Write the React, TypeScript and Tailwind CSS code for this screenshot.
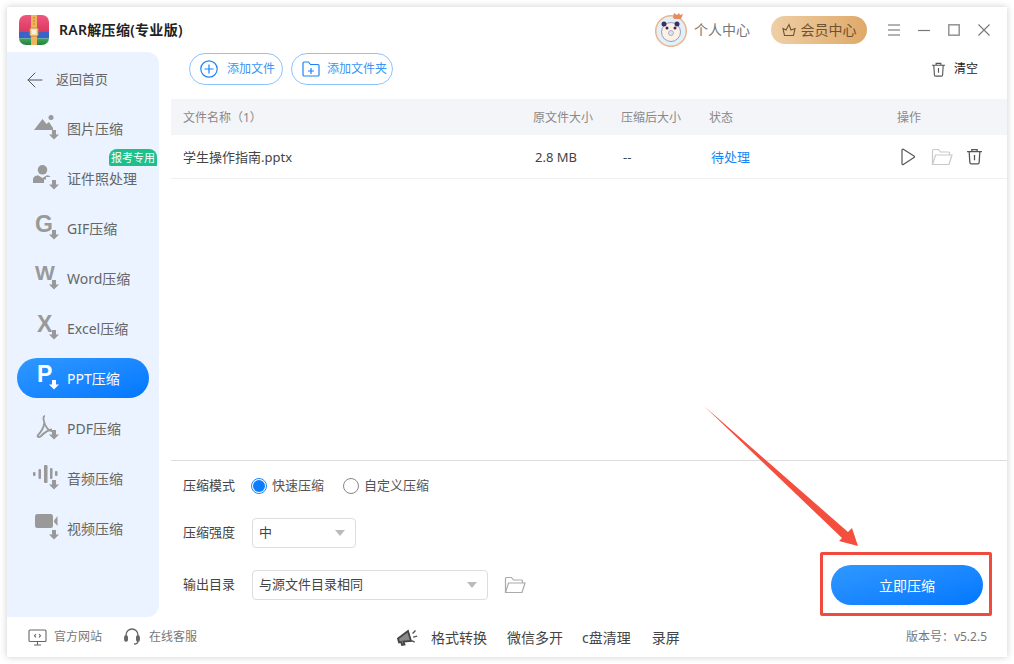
import { ArrowLeft } from 'lucide-react';
import type { ReactNode } from 'react';

const FONT = 'font-["Noto_Sans","Noto_Sans_CJK_SC",sans-serif]';

function DownArrow({ white }: { white?: boolean }) {
  return (
    <svg className="absolute left-[15px] top-[15px]" width="10" height="10" viewBox="0 0 10 10">
      <path d="M3 0h4v4.500h3L5 9.500 0 4.500h3z" fill={white ? '#fff' : '#999'} />
    </svg>
  );
}

function Letter({ children, className }: { children: string; className: string }) {
  return <span className={`absolute font-["Liberation_Sans",sans-serif] leading-[26px] font-bold ${className}`}>{children}</span>;
}

function ImageGlyph() {
  return (
    <svg className="absolute left-0 top-0" width="20" height="18" viewBox="0 0 20 18" fill="#999">
      <circle cx="17" cy="2.500" r="2.500" />
      <path d="M0 15 8.500 4l4 5 2.500-2 4 6v2H8z" />
    </svg>
  );
}

function PersonGlyph() {
  return (
    <svg className="absolute left-[-1px] top-0" width="20" height="20" viewBox="0 0 20 20" fill="#999">
      <circle cx="9.500" cy="4.800" r="4.800" />
      <path d="M0 18v-3.500c0-2.500 2.500-4 5-4.300l4.500 2.800 4.500-2.800c1.500.2 3 .8 3.600 1.800H13v2.500h-2V18z" />
    </svg>
  );
}

function PdfGlyph() {
  return (
    <svg className="absolute left-[2px] top-0" width="20" height="24" viewBox="0 0 20 24" fill="none" stroke="#999" strokeWidth="1.800">
      <path d="M9 1C6.500 1 7 7 11 13c1.200 1.800 3 3 5 3.500" />
      <path d="M8.500 8C7.500 13 5 17 2 20c-1.500 2 1 2.800 3 1 3-3 6-6 11-6.500" />
    </svg>
  );
}

function AudioGlyph() {
  return (
    <svg className="absolute left-[-1px] top-0" width="26" height="20" viewBox="0 0 26 20" fill="#999">
      <rect x="0" y="7" width="2.500" height="4" rx="1" />
      <rect x="5.500" y="4" width="2.500" height="10" rx="1" />
      <rect x="11" y="0" width="3.500" height="18" rx="1" />
      <rect x="17" y="3" width="2.500" height="11" rx="1" />
      <rect x="22" y="6" width="2.500" height="5" rx="1" />
    </svg>
  );
}

function VideoGlyph() {
  return (
    <svg className="absolute left-[1px] top-[-1px]" width="24" height="16" viewBox="0 0 24 16" fill="#999">
      <rect x="0" y="0" width="18" height="14" rx="2.500" />
      <path d="M19 6.500 22.500 2v10L19 8z" />
    </svg>
  );
}

const NAV: { label: string; glyph: ReactNode; active?: boolean }[] = [
  { label: '图片压缩', glyph: <ImageGlyph /> },
  { label: '证件照处理', glyph: <PersonGlyph /> },
  { label: 'GIF压缩', glyph: <Letter className="left-[1px] top-[-4px] text-[23px]">G</Letter> },
  { label: 'Word压缩', glyph: <Letter className="left-[1px] top-[-5px] text-[21px]">W</Letter> },
  { label: 'Excel压缩', glyph: <Letter className="left-[3px] top-[-4px] text-[23px]">X</Letter> },
  { label: 'PPT压缩', glyph: <Letter className="left-[3px] top-[-4px] text-[23px]">P</Letter>, active: true },
  { label: 'PDF压缩', glyph: <PdfGlyph /> },
  { label: '音频压缩', glyph: <AudioGlyph /> },
  { label: '视频压缩', glyph: <VideoGlyph /> },
];

function Logo() {
  return (
    <svg width="30" height="30" viewBox="0 0 30 30">
      <defs>
        <clipPath id="logo-clip">
          <rect width="30" height="30" rx="7" />
        </clipPath>
        <linearGradient id="logo-red" x1="0" y1="0" x2="0" y2="1">
          <stop offset="0" stopColor="#f0577c" />
          <stop offset="1" stopColor="#d93a62" />
        </linearGradient>
        <linearGradient id="logo-green" x1="0" y1="0" x2="0" y2="1">
          <stop offset="0" stopColor="#3aa95a" />
          <stop offset="1" stopColor="#25803f" />
        </linearGradient>
      </defs>
      <g clipPath="url(#logo-clip)">
        <rect width="30" height="17" fill="url(#logo-red)" />
        <rect y="17" width="30" height="6.500" fill="#3a62c8" />
        <rect y="23.500" width="30" height="6.500" fill="url(#logo-green)" />
        <rect x="12" width="6" height="30" fill="#f0b45a" />
        <path d="M14 3h2M14 6h2M14 9h2" stroke="#b9802f" strokeWidth="1" />
        <rect x="11" y="13" width="8" height="8" rx="1" fill="#f8dca6" stroke="#c98a35" />
        <rect x="13" y="15" width="4" height="4" fill="#f0f0e8" />
      </g>
    </svg>
  );
}

function Avatar() {
  return (
    <svg width="34" height="34" viewBox="0 0 34 34">
      <circle cx="16" cy="18" r="15.300" fill="#dff1fb" stroke="#eeb48c" strokeWidth="1.500" />
      <circle cx="16" cy="19" r="9.500" fill="#fdf1e3" stroke="#8e83ad" strokeWidth="0.800" />
      <circle cx="16" cy="20" r="2.500" fill="#d5e8f5" stroke="#8e83ad" strokeWidth="0.600" />
      <circle cx="9" cy="11" r="2.500" fill="#3c2f66" />
      <circle cx="22" cy="11" r="2.500" fill="#3c2f66" />
      <circle cx="12" cy="15" r="1.500" fill="#3c2f66" />
      <circle cx="20" cy="15" r="1.500" fill="#3c2f66" />
      <path d="M18 4 19 0l3 2 2-2 1 2 3-1-2 5h-7z" fill="#e58d5e" />
    </svg>
  );
}

function Trash({ size = 16, color = '#555' }: { size?: number; color?: string }) {
  return (
    <svg width={size} height={size} viewBox="0 0 16 16" fill="none" stroke={color} strokeWidth="1.200">
      <path d="M1 3.500h14M5.500 3.500V1.500h5v2M3 3.500l.6 10c0 1 .6 1.500 1.400 1.500h6c.8 0 1.400-.5 1.400-1.500l.6-10M8 6.500v5" />
    </svg>
  );
}

function OpenFolder({ color }: { color: string }) {
  return (
    <svg width="22" height="18" viewBox="0 0 22 18" fill="none" stroke={color} strokeWidth="1.200">
      <path d="M1.500 16V2.500c0-.6.400-1 1-1h5l2 2.500h8c.6 0 1 .4 1 1V7" />
      <path d="M1.500 16.500 4.500 7h16.500l-3 9.500z" />
    </svg>
  );
}

function Caret() {
  return <span className="w-0 h-0 border-x-[5px] border-x-transparent border-t-[6px] border-t-[#bbb]" />;
}

export default function App() {
  return (
    <div className={`relative w-[1014px] h-[664px] p-[7px] bg-white overflow-hidden ${FONT}`}>
      <div className="w-[1000px] h-[650px] flex flex-col bg-white shadow-[0_0_7px_rgba(0,0,0,0.2)]">
        {/* title bar */}
        <div className="h-[45px] flex items-center pl-3 pr-[17px]">
          <Logo />
          <span className="ml-[10px] text-[14px] font-semibold tracking-[0.3px] text-[#222]">RAR解压缩(专业版)</span>
          <div className="ml-auto flex items-center">
            <Avatar />
            <span className="ml-[5px] text-[14px] text-[#777]">个人中心</span>
            <div className="ml-[21px] w-[96px] h-[28px] rounded-full flex items-center justify-center gap-[5px] bg-linear-to-r from-[#efcfa6] to-[#dfa968] text-[14px] text-[#6e5230]">
              <svg width="14" height="14" viewBox="0 0 14 14" fill="none" stroke="#6e5230" strokeWidth="1.100">
                <path d="M1 5.500 4 7l3-5.500L9 7l4-1.500-1.500 7h-9z" />
              </svg>
              会员中心
            </div>
            <svg className="ml-[21px]" width="12" height="12" viewBox="0 0 12 12" stroke="#999" strokeWidth="1.300">
              <path d="M0 1h12M0 6h12M0 11h12" />
            </svg>
            <svg className="ml-[18px]" width="12" height="12" viewBox="0 0 12 12" stroke="#777" strokeWidth="1.200">
              <path d="M0 6.500h12" />
            </svg>
            <svg className="ml-[18px]" width="12" height="12" viewBox="0 0 12 12" fill="none" stroke="#999" strokeWidth="1.600">
              <rect x="0.800" y="0.800" width="10.400" height="10.400" />
            </svg>
            <svg className="ml-[18px]" width="12" height="12" viewBox="0 0 12 12" stroke="#777" strokeWidth="1.100">
              <path d="M.5.500l11 11M11.500.500l-11 11" />
            </svg>
          </div>
        </div>

        <div className="flex-1 flex min-h-0">
          {/* sidebar */}
          <div className="relative w-[152px] bg-[#eaf3ff] rounded-r-[12px] pt-2">
            <div className="h-10 mb-2 flex items-center pl-[16px] text-[13px] text-[#666]">
              <ArrowLeft size={24} strokeWidth={1} color="#555" />
              <span className="ml-[9px]">返回首页</span>
            </div>
            <div className="flex flex-col gap-[10px] mx-[10px]">
              {NAV.map((item) => (
                <div
                  key={item.label}
                  className={
                    item.active
                      ? 'h-10 rounded-full flex items-center pl-[17px] gap-[7px] bg-linear-to-br from-[#2f98ff] to-[#0077ff] text-white'
                      : 'h-10 rounded-full flex items-center pl-[17px] gap-[7px] text-[#999]'
                  }
                >
                  <span className="relative w-[26px] h-[26px] shrink-0">
                    {item.glyph}
                    <DownArrow white={item.active} />
                  </span>
                  <span className={item.active ? 'text-[14px] text-white' : 'text-[14px] text-[#666]'}>{item.label}</span>
                </div>
              ))}
            </div>
            <span className="absolute left-[102px] top-[97px] w-[48px] h-[17px] rounded-t-[8px] rounded-bl-[2px] bg-[#1ec08a] text-white text-[11px] leading-[17px] text-center">
              报考专用
            </span>
          </div>

          {/* main */}
          <div className="flex-1 flex flex-col pl-3 min-w-0">
            <div className="h-[47px] shrink-0 flex items-start pl-[18px] pt-px">
              <button className="h-8 w-[94px] rounded-full border border-[#8cc4ff] flex items-center pl-[10px] gap-[9px] text-[12px] text-[#3a95f5]">
                <svg width="18" height="18" viewBox="0 0 18 18" fill="none" stroke="#1a86f5" strokeWidth="1.200">
                  <circle cx="9" cy="9" r="8.200" />
                  <path d="M9 4.500v9M4.500 9h9" />
                </svg>
                添加文件
              </button>
              <button className="ml-2 h-8 w-[102px] rounded-full border border-[#8cc4ff] flex items-center pl-[10px] gap-[7px] text-[12px] text-[#3a95f5]">
                <svg width="18" height="16" viewBox="0 0 18 16" fill="none" stroke="#1a86f5" strokeWidth="1.200">
                  <path d="M1 3V2c0-.6.400-1 1-1h4.500l2 2.500H16c.6 0 1 .4 1 1V14c0 .6-.4 1-1 1H2c-.6 0-1-.4-1-1z" />
                  <path d="M9 7v6M6 10h6" />
                </svg>
                添加文件夹
              </button>
              <div className="ml-auto mt-[7px] mr-[29px] flex items-center gap-2 text-[12px] text-[#222]">
                <Trash size={15} />
                清空
              </div>
            </div>

            <div className="h-[36px] shrink-0 grid grid-cols-[350px_88px_88px_188px_122px] items-center pt-px bg-[#f4f5f9] text-[12px] text-[#888]">
              <span className="pl-3">文件名称（1）</span>
              <span className="pl-3">原文件大小</span>
              <span className="pl-3">压缩后大小</span>
              <span className="pl-3">状态</span>
              <span className="pl-3">操作</span>
            </div>
            <div className="h-[44px] shrink-0 grid grid-cols-[350px_88px_88px_188px_122px] items-center border-b border-[#f0f0f0] text-[13px] text-[#444]">
              <span className="pl-3 pt-[2px]">学生操作指南.pptx</span>
              <span className="pl-[14px] pt-[2px]">2.8 MB</span>
              <span className="pl-[14px] pt-[2px]">--</span>
              <span className="pl-[14px] pt-[2px] text-[#1a86f5]">待处理</span>
              <div className="pl-[15px] flex items-center">
                <svg width="16" height="18" viewBox="0 0 16 18" fill="none" stroke="#555" strokeWidth="1.200">
                  <path d="M2 2c0-.8.600-1.100 1.300-.7L14 8c.7.400.7 1.200 0 1.600L3.300 16.500c-.7.400-1.300 0-1.300-.7z" />
                </svg>
                <span className="ml-[15px]">
                  <OpenFolder color="#c9c9c9" />
                </span>
                <span className="ml-[13px]">
                  <Trash size={17} />
                </span>
              </div>
            </div>

            <div className="flex-1" />

            {/* compress options */}
            <div className="h-[157px] shrink-0 border-t border-[#ddd] flex justify-between items-end">
              <div className="self-start pl-3 text-[13px] text-[#444] flex flex-col">
                <div className="mt-[12px] h-[26px] flex items-center">
                  <span className="w-[68px]">压缩模式</span>
                  <span className="w-4 h-4 rounded-full border border-[#1a86f5] flex items-center justify-center">
                    <span className="w-3 h-3 rounded-full bg-[#0a7cff]" />
                  </span>
                  <span className="ml-[5px] text-[#555]">快速压缩</span>
                  <span className="ml-[19px] w-4 h-4 rounded-full border border-[#888]" />
                  <span className="ml-[5px] text-[#555]">自定义压缩</span>
                </div>
                <div className="mt-[19px] h-[30px] flex items-center">
                  <span className="w-[69px]">压缩强度</span>
                  <div className="w-[104px] h-[30px] rounded-[4px] border border-[#ddd] flex items-center justify-between pl-[6px] pr-[10px]">
                    中
                    <Caret />
                  </div>
                </div>
                <div className="mt-[22px] h-[30px] flex items-center">
                  <span className="w-[69px]">输出目录</span>
                  <div className="w-[236px] h-[30px] rounded-[4px] border border-[#ddd] flex items-center justify-between pl-[6px] pr-[10px]">
                    与源文件目录相同
                    <Caret />
                  </div>
                  <span className="ml-4">
                    <OpenFolder color="#aaa" />
                  </span>
                </div>
              </div>
              <div className="mr-[15px] mb-px w-[172px] h-[64px] border-[3px] border-[#f04c3e] rounded-[2px] pl-[8px] pt-[10px]">
                <button className="w-[152px] h-10 rounded-full bg-linear-to-br from-[#2f98ff] to-[#0077ff] text-white text-[14px]">
                  立即压缩
                </button>
              </div>
            </div>
          </div>
        </div>

        {/* footer */}
        <div className="h-[40px] shrink-0 flex items-center pl-[21px] pr-[20px] text-[12px] text-[#777]">
          <svg width="19" height="17" viewBox="0 0 19 17" fill="none" stroke="#666" strokeWidth="1.100">
            <rect x="1" y="1" width="17" height="11.500" rx="1" />
            <path d="M6 16h7M9.500 12.500V16M8 5 6.500 6.700 8 8.500M11 5l1.500 1.700L11 8.500" />
          </svg>
          <span className="ml-[7px]">官方网站</span>
          <svg className="ml-[22px]" width="16" height="18" viewBox="0 0 16 18" fill="none" stroke="#666" strokeWidth="1.300">
            <path d="M2 9V7a6 6 0 0 1 12 0v2" />
            <rect x="0.800" y="8" width="2.500" height="5" rx="1" fill="#666" />
            <rect x="12.700" y="8" width="2.500" height="5" rx="1" fill="#666" />
            <path d="M14 13c0 2-2 3-4 3" />
          </svg>
          <span className="ml-[9px]">在线客服</span>
          <svg className="ml-[200px]" width="22" height="20" viewBox="0 0 22 20" fill="#555">
            <path d="M1 11.500 11 4l3 10-7.500.5 1 3-2.500.5L4 15l-2 .5z" fill="#888" stroke="#444" strokeWidth="1.800" />
            <path d="M15 6l3-3 1 1-3 3zM16 9.500l4-1 .3 1.300-4 1zM15 13l3 1.500-.6 1.200-3-1.500z" />
          </svg>
          <div className="ml-[12px] flex items-center text-[14px] text-[#444]">
            <span>格式转换</span>
            <span className="ml-[20px]">微信多开</span>
            <span className="ml-[19px]">c盘清理</span>
            <span className="ml-[21px]">录屏</span>
          </div>
          <span className="ml-auto text-[#777]">版本号：v5.2.5</span>
        </div>
      </div>

      {/* annotation arrow */}
      <svg className="absolute left-[700px] top-[400px]" width="170" height="155" viewBox="700 400 170 155">
        <polygon points="704,406 848,532 852,528 858,546 839,541 842,538" fill="#f44f3e" />
      </svg>
    </div>
  );
}
